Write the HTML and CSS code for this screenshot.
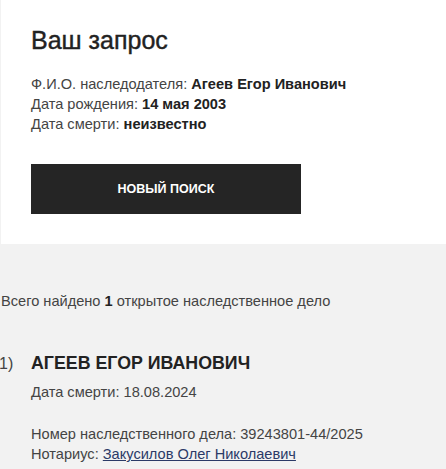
FILE: index.html
```html
<!DOCTYPE html>
<html lang="ru">
<head>
    <meta charset="UTF-8">
    <meta name="viewport" content="width=device-width, initial-scale=1.0">
    <title>Наследственные дела</title>
    <link rel="stylesheet" href="styles.css">
</head>
<body>
    <div class="request">
        <h1>Ваш запрос</h1>
        <div class="request-info">
            <p>Ф.И.О. наследодателя: <b>Агеев Егор Иванович</b></p>
            <p>Дата рождения: <b>14 мая 2003</b></p>
            <p>Дата смерти: <b>неизвестно</b></p>
        </div>
        <button class="new-search">Новый поиск</button>
    </div>

    <div class="results">
        <p class="total">Всего найдено <b>1</b> открытое наследственное дело</p>

        <ol class="cases">
            <li class="case">
                <h2>Агеев Егор Иванович</h2>
                <p class="case-death">Дата смерти: 18.08.2024</p>
                <p>Номер наследственного дела: 39243801-44/2025</p>
                <p>Нотариус: <a href="#">Закусилов Олег Николаевич</a></p>
            </li>
        </ol>
    </div>
</body>
</html>
```

FILE: styles.css
```css
body {
    font-family: "Liberation Sans", Arial, sans-serif;
    margin: 0;
    background-color: #f2f2f2;
    color: #444;
    font-size: 14.6px;
    line-height: 20px;
}

p {
    margin: 0;
}

b {
    color: #222;
}

.request {
    background-color: #fff;
    margin-left: 1px;
    padding: 26px 30px 30px;
}

.request h1 {
    margin: 0 0 20px;
    font-size: 25px;
    line-height: 28px;
    font-weight: normal;
    color: #222;
    -webkit-text-stroke: 0.4px #222;
}

.new-search {
    display: block;
    width: 270px;
    height: 50px;
    margin-top: 30px;
    background-color: #252525;
    color: #fff;
    border: none;
    font-family: inherit;
    font-size: 12.5px;
    font-weight: bold;
    text-transform: uppercase;
    cursor: pointer;
}

.results {
    padding: 47px 0 0 1px;
}

.cases {
    margin: 40px 0 0;
    padding-left: 30px;
}

.case::marker {
    content: counter(list-item) ")    ";
    font-size: 16px;
    color: #444;
}

.case h2 {
    margin: 0 0 7px;
    font-size: 17.8px;
    line-height: 24px;
    text-transform: uppercase;
    color: #222;
}

.case-death {
    margin-bottom: 22px;
}

.case a {
    color: #2b3a67;
}
```
